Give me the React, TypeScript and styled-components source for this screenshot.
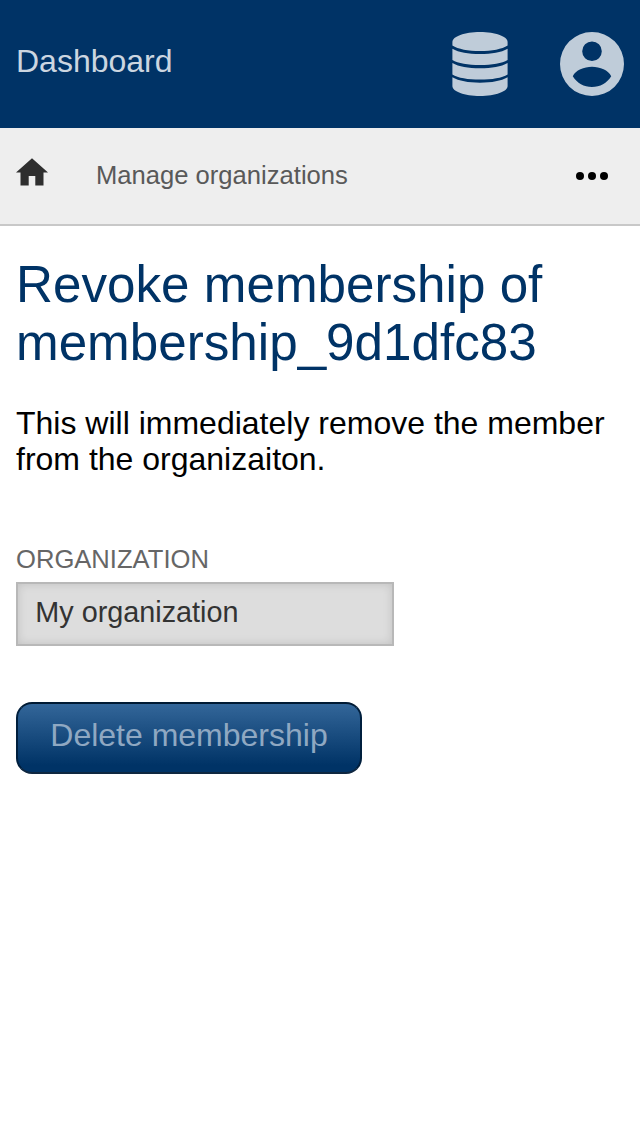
import React from "react";
import styled, { createGlobalStyle } from "styled-components";

const GlobalStyle = createGlobalStyle`
  *, *::before, *::after { box-sizing: border-box; }
  body {
    margin: 0;
    background: #fff;
    color: #000;
    font: 32px/36px "Liberation Sans", Arial, sans-serif;
  }
  svg { display: block; }
`;

const Header = styled.header`
  display: flex;
  align-items: center;
  justify-content: space-between;
  height: 128px;
  padding: 0 16px;
  background: #003366;
`;

const HeaderLink = styled.a`
  margin-bottom: 6px;
  color: #ccd6e0;
`;

const HeaderIcons = styled.nav`
  display: flex;
  gap: 52px;
  color: #bfccd9;
`;

const Breadcrumbs = styled.nav`
  display: flex;
  align-items: center;
  height: 98px;
  padding: 0 32px 0 16px;
  background: #eee;
  border-bottom: 2px solid #c8c8c8;
`;

const HomeLink = styled.a`
  margin: 0 48px 8px 0;
  color: #2e2e2e;
`;

const Crumb = styled.a`
  flex: 1;
  margin-bottom: 2px;
  font-size: 25.6px;
  color: #595959;
`;

const Main = styled.main`
  padding: 30px 16px;
`;

const Title = styled.h1`
  margin: 0 0 33px;
  font-size: 51.2px;
  line-height: 58px;
  font-weight: 400;
  color: #003366;
`;

const Description = styled.p`
  margin: 0 0 66px;
`;

const Field = styled.div`
  display: flex;
  flex-direction: column;
  align-items: flex-start;
  margin-bottom: 56px;
`;

const Label = styled.label`
  margin-bottom: 7px;
  font-size: 25.6px;
  line-height: 32px;
  text-transform: uppercase;
  color: #666;
`;

const Input = styled.input`
  width: 378px;
  height: 64px;
  padding: 0 17.28px 4px;
  border: 2px solid #b8b8b8;
  border-radius: 0;
  background: #ddd;
  box-shadow: inset 0 0 10px rgba(0, 0, 0, 0.13);
  font: 28.8px "Liberation Sans", Arial, sans-serif;
  color: #333;
`;

const Button = styled.button`
  display: block;
  width: 346px;
  height: 72px;
  padding: 0 0 5px;
  border: 2px solid;
  border-color: #001a33 #001f3d #0f2740;
  border-radius: 16px;
  background: linear-gradient(#336699, #003366 90%);
  font: 32px "Liberation Sans", Arial, sans-serif;
  color: #8fa8c2;
`;

const DatabaseIcon = () => (
  <svg width="56" height="64" viewBox="0 0 56 64" fill="currentColor">
    <path d="M28 0C43.5 0 55.6 4.5 55.6 10V13.5C50 17.2 40 19 28 19S6 17.2 .4 13.5V10C.4 4.5 12.5 0 28 0Z" />
    <path d="M.4 16.7C7 20.4 16 22 28 22S49 20.4 55.6 16.7V28C50 31.4 40 33 28 33S6 31.4 .4 28Z" />
    <path d="M.4 31C7 34.7 16 36.3 28 36.3S49 34.7 55.6 31V42.5C50 46 40 47.6 28 47.6S6 46 .4 42.5Z" />
    <path d="M.4 45.3C7 49 16 50.7 28 50.7S49 49 55.6 45.3V54C55.6 59.5 43.5 64 28 64S.4 59.5 .4 54Z" />
  </svg>
);

const AccountIcon = () => (
  <svg width="64" height="64" viewBox="0 0 64 64" fill="currentColor" fillRule="evenodd">
    <path d="M32 0a32 32 0 1 1 0 64a32 32 0 1 1 0-64ZM32 9.4a9.8 9.8 0 1 0 0 19.6a9.8 9.8 0 1 0 0-19.6ZM12.8 44.2C17 51 24 55 32 55S47 51 51.2 44.2C48.5 38.3 40 34.8 32 34.8S15.5 38.3 12.8 44.2Z" />
  </svg>
);

const HomeIcon = () => (
  <svg width="32" height="28" viewBox="0 0 32 28" fill="currentColor">
    <path d="M16 .3L32 14.6H27.5V27.5H19.3V18H12.7V27.5H4.5V14.6H0Z" />
  </svg>
);

const MoreIcon = () => (
  <svg width="32" height="8" viewBox="0 0 32 8" fill="#000">
    <circle cx="4" cy="4" r="4" />
    <circle cx="16" cy="4" r="4" />
    <circle cx="28" cy="4" r="4" />
  </svg>
);

export default function App() {
  return (
    <>
      <GlobalStyle />
      <Header>
        <HeaderLink>Dashboard</HeaderLink>
        <HeaderIcons>
          <DatabaseIcon />
          <AccountIcon />
        </HeaderIcons>
      </Header>
      <Breadcrumbs>
        <HomeLink>
          <HomeIcon />
        </HomeLink>
        <Crumb>Manage organizations</Crumb>
        <MoreIcon />
      </Breadcrumbs>
      <Main>
        <Title>Revoke membership of membership_9d1dfc83</Title>
        <Description>This will immediately remove the member from the organizaiton.</Description>
        <Field>
          <Label htmlFor="organization">Organization</Label>
          <Input id="organization" value="My organization" readOnly />
        </Field>
        <Button type="button">Delete membership</Button>
      </Main>
    </>
  );
}
